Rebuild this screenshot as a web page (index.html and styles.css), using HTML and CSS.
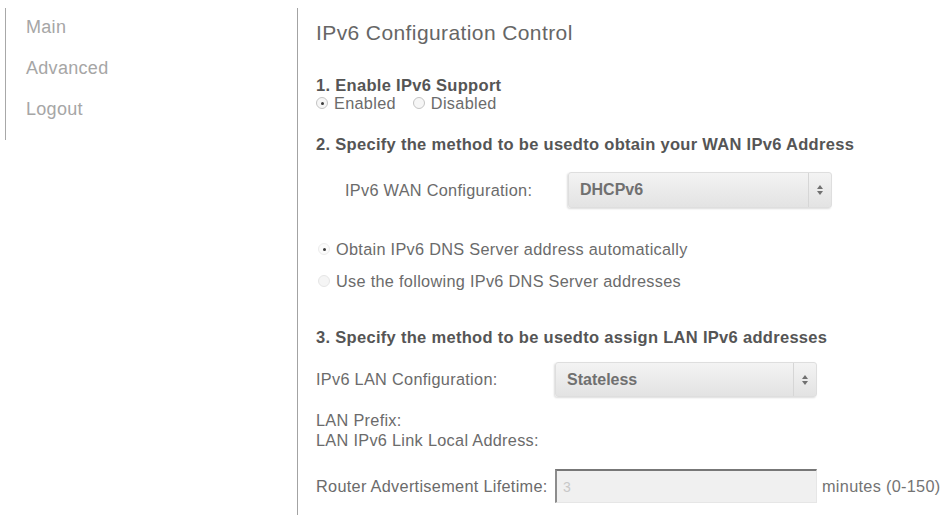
FILE: index.html
```html
<!DOCTYPE html>
<html lang="en">
<head>
<meta charset="utf-8">
<title>IPv6 Configuration Control</title>
<link rel="stylesheet" href="styles.css">
</head>
<body>
<div class="page">
  <nav class="sidebar">
    <a class="nav-item" href="#">Main</a>
    <a class="nav-item" href="#">Advanced</a>
    <a class="nav-item" href="#">Logout</a>
  </nav>
  <main class="content">
    <h1 class="title">IPv6 Configuration Control</h1>

    <h2 class="step step-1">1. Enable IPv6 Support</h2>
    <div class="radio-line">
      <span class="radio checked"></span><span class="radio-label">Enabled</span>
      <span class="radio radio-gap"></span><span class="radio-label">Disabled</span>
    </div>

    <h2 class="step step-2">2. Specify the method to be usedto obtain your WAN IPv6 Address</h2>
    <div class="field wan-row">
      <span class="field-label wan-label">IPv6 WAN Configuration:</span>
      <div class="select wan-select"><span class="select-value">DHCPv6</span><span class="select-arrows"><span class="arr-up"></span><span class="arr-down"></span></span></div>
    </div>

    <div class="radio-line dns-auto">
      <span class="radio checked small"></span><span class="radio-label">Obtain IPv6 DNS Server address automatically</span>
    </div>
    <div class="radio-line dns-manual">
      <span class="radio faint"></span><span class="radio-label">Use the following IPv6 DNS Server addresses</span>
    </div>

    <h2 class="step step-3">3. Specify the method to be usedto assign LAN IPv6 addresses</h2>
    <div class="field lan-row">
      <span class="field-label lan-label">IPv6 LAN Configuration:</span>
      <div class="select lan-select"><span class="select-value">Stateless</span><span class="select-arrows"><span class="arr-up"></span><span class="arr-down"></span></span></div>
    </div>

    <div class="info prefix">LAN Prefix:</div>
    <div class="info linklocal">LAN IPv6 Link Local Address:</div>

    <div class="field router-row">
      <span class="field-label lan-label">Router Advertisement Lifetime:</span>
      <div class="text-input"><span class="input-value">3</span></div>
      <span class="unit">minutes (0-150)</span>
    </div>
  </main>
</div>
</body>
</html>
```

FILE: styles.css
```css
* { box-sizing: border-box; }

html, body {
  margin: 0;
  padding: 0;
  background: #ffffff;
}

body {
  font-family: "Liberation Sans", Arial, Helvetica, sans-serif;
  color: #6b6b6b;
  width: 945px;
  height: 523px;
  overflow: hidden;
}

.page {
  display: flex;
  align-items: flex-start;
}

/* Sidebar */
.sidebar {
  width: 292px;
  margin-left: 5px;
  margin-top: 8px;
  height: 132px;
  border-left: 1px solid #a8a8a8;
  display: flex;
  flex-direction: column;
  padding-top: 9px;
  padding-left: 20px;
}

.nav-item {
  display: block;
  height: 42px;
  line-height: 20px;
  font-size: 18px;
  letter-spacing: 0.3px;
  color: #a6a6a6;
  text-decoration: none;
}

/* Main content */
.content {
  margin-top: 8px;
  height: 507px;
  border-left: 1px solid #a3a3a3;
  padding-left: 18px;
  display: flex;
  flex-direction: column;
  flex: 1;
}

.title {
  margin: 13px 0 0 0;
  height: 24px;
  line-height: 24px;
  font-size: 21px;
  letter-spacing: 0.4px;
  font-weight: normal;
  color: #666666;
}

.step {
  margin: 0;
  height: 17px;
  line-height: 17px;
  font-size: 16.5px;
  letter-spacing: 0.3px;
  font-weight: bold;
  color: #555555;
  white-space: nowrap;
}

.step-1 { margin-top: 32px; }
.step-2 { margin-top: 24px; }
.step-3 { margin-top: 39px; }

.radio-line {
  display: flex;
  align-items: center;
  height: 18px;
  font-size: 16.3px;
  letter-spacing: 0.3px;
  color: #6b6b6b;
  white-space: nowrap;
}

.radio {
  width: 12px;
  height: 12px;
  border-radius: 50%;
  border: 1px solid #c4c4c4;
  background: #f6f6f6;
  margin-right: 6px;
  margin-left: 0;
  position: relative;
  flex: none;
}

.radio.checked::after {
  content: "";
  position: absolute;
  left: 3.5px;
  top: 3.5px;
  width: 3px;
  height: 3px;
  border-radius: 50%;
  background: #3c3c3c;
}

.radio.small {
  border-color: #ececec;
  background: #fbfbfb;
}

.radio.faint {
  border-color: #e6e6e6;
  background: #f5f5f5;
}

.radio-gap { margin-left: 17px; }

.dns-auto { margin-top: 32px; }
.dns-manual { margin-top: 14px; }
.dns-auto .radio, .dns-manual .radio { margin-left: 2px; margin-right: 6px; }

.field {
  display: flex;
  align-items: center;
  white-space: nowrap;
  font-size: 16.3px;
  letter-spacing: 0.3px;
  color: #6b6b6b;
}

.wan-row { margin-top: 19px; padding-left: 29px; }
.wan-label { width: 223px; }

.lan-row { margin-top: 16px; }
.lan-label { width: 239px; }

.select {
  display: flex;
  align-items: center;
  justify-content: space-between;
  border-radius: 3px;
  border: 1px solid #dedede;
  background: linear-gradient(#f3f3f3, #e3e3e3);
  box-shadow: -1px 1px 2px rgba(0,0,0,0.14);
  font-size: 16px;
  font-weight: bold;
  letter-spacing: 0;
  color: #707070;
}

.wan-select { width: 264px; height: 36px; }
.lan-select { width: 262px; height: 35px; }

.select-value {
  padding-left: 11px;
}

.select-arrows {
  width: 23px;
  height: 100%;
  border-left: 1px solid #d6d6d6;
  display: flex;
  flex-direction: column;
  align-items: center;
  justify-content: center;
  gap: 2px;
}

.arr-up, .arr-down {
  width: 0;
  height: 0;
  border-left: 3px solid transparent;
  border-right: 3px solid transparent;
}

.arr-up { border-bottom: 4px solid #707070; }
.arr-down { border-top: 4px solid #707070; }

.info {
  height: 18px;
  line-height: 18px;
  font-size: 16.3px;
  letter-spacing: 0.3px;
  color: #6b6b6b;
}

.prefix { margin-top: 14px; }
.linklocal { margin-top: 2px; }

.router-row { margin-top: 20px; }

.text-input {
  width: 262px;
  height: 34px;
  background: #f0f0f0;
  border-top: 2px solid #777777;
  border-left: 2px solid #8c8c8c;
  border-right: 1px solid #e6e6e6;
  border-bottom: 1px solid #e6e6e6;
  display: flex;
  align-items: center;
  padding-left: 6px;
}

.input-value {
  font-size: 14px;
  color: #c8c8c8;
}

.unit {
  margin-left: 5px;
  color: #737373;
}
```
